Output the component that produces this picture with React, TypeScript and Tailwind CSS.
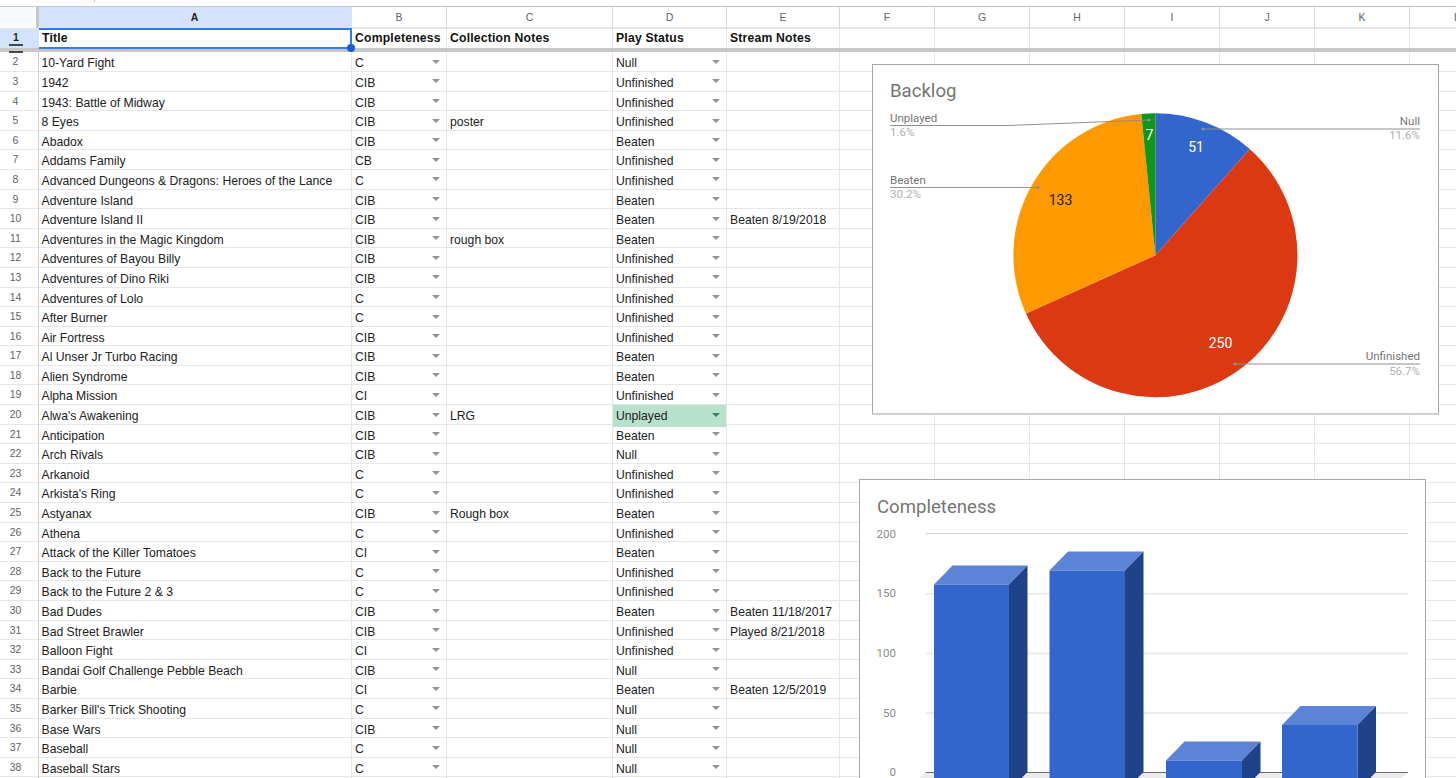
const U = "Unfinished";
const B = "Beaten";

// title, completeness, collection notes, play status, stream notes
const rows: [string, string, string, string, string][] = [
  ["10-Yard Fight", "C", "", "Null", ""],
  ["1942", "CIB", "", U, ""],
  ["1943: Battle of Midway", "CIB", "", U, ""],
  ["8 Eyes", "CIB", "poster", U, ""],
  ["Abadox", "CIB", "", B, ""],
  ["Addams Family", "CB", "", U, ""],
  ["Advanced Dungeons & Dragons: Heroes of the Lance", "C", "", U, ""],
  ["Adventure Island", "CIB", "", B, ""],
  ["Adventure Island II", "CIB", "", B, "Beaten 8/19/2018"],
  ["Adventures in the Magic Kingdom", "CIB", "rough box", B, ""],
  ["Adventures of Bayou Billy", "CIB", "", U, ""],
  ["Adventures of Dino Riki", "CIB", "", U, ""],
  ["Adventures of Lolo", "C", "", U, ""],
  ["After Burner", "C", "", U, ""],
  ["Air Fortress", "CIB", "", U, ""],
  ["Al Unser Jr Turbo Racing", "CIB", "", B, ""],
  ["Alien Syndrome", "CIB", "", B, ""],
  ["Alpha Mission", "CI", "", U, ""],
  ["Alwa's Awakening", "CIB", "LRG", "Unplayed", ""],
  ["Anticipation", "CIB", "", B, ""],
  ["Arch Rivals", "CIB", "", "Null", ""],
  ["Arkanoid", "C", "", U, ""],
  ["Arkista's Ring", "C", "", U, ""],
  ["Astyanax", "CIB", "Rough box", B, ""],
  ["Athena", "C", "", U, ""],
  ["Attack of the Killer Tomatoes", "CI", "", B, ""],
  ["Back to the Future", "C", "", U, ""],
  ["Back to the Future 2 & 3", "C", "", U, ""],
  ["Bad Dudes", "CIB", "", B, "Beaten 11/18/2017"],
  ["Bad Street Brawler", "CIB", "", U, "Played 8/21/2018"],
  ["Balloon Fight", "CI", "", U, ""],
  ["Bandai Golf Challenge Pebble Beach", "CIB", "", "Null", ""],
  ["Barbie", "CI", "", B, "Beaten 12/5/2019"],
  ["Barker Bill's Trick Shooting", "C", "", "Null", ""],
  ["Base Wars", "CIB", "", "Null", ""],
  ["Baseball", "C", "", "Null", ""],
  ["Baseball Stars", "C", "", "Null", ""],
];

const gridCols =
  "grid grid-cols-[39px_313px_95px_166px_114px_113px_95px_95px_95px_95px_95px_95px_95px]";
const letters = ["F", "G", "H", "I", "J", "K", "L"];

function Arrow({ dark }: { dark?: boolean }) {
  return (
    <svg width="8" height="4" viewBox="0 0 8 4" className="absolute right-[6px] top-[7.5px]">
      <path d="M0 0H8L4 4Z" fill={dark ? "#3f7d5e" : "#949494"} />
    </svg>
  );
}

function EmptyCells() {
  return (
    <>
      {letters.map((l) => (
        <div key={l} className="border-r border-[#e6e6e6]" />
      ))}
    </>
  );
}

function Row({ n, data }: { n: number; data: [string, string, string, string, string] }) {
  const [title, comp, notes, status, stream] = data;
  const cell = "border-r border-[#e6e6e6] overflow-visible whitespace-nowrap leading-[22px]";
  return (
    <div className={`${gridCols} h-[19.6px] border-b border-[#e6e6e6]`}>
      <div className="border-r border-[#d0d0d0] pr-[7px] text-center text-[10.5px] leading-[18px] text-[#5f6368]">
        {n}
      </div>
      <div className={`${cell} pl-[2.5px]`}>{title}</div>
      <div className={`${cell} relative pl-[3px]`}>
        {comp}
        <Arrow />
      </div>
      <div className={`${cell} pl-[3px]`}>{notes}</div>
      <div className={`${cell} relative pl-[3px] ${status === "Unplayed" ? "bg-[#b7e1cd]" : ""}`}>
        {status}
        <Arrow dark={status === "Unplayed"} />
      </div>
      <div className={`${cell} pl-[3px]`}>{stream}</div>
      <EmptyCells />
    </div>
  );
}

// slices run clockwise from 12 o'clock
const slices = [
  { value: 51, color: "#3366cc" },
  { value: 250, color: "#dc3912" },
  { value: 133, color: "#ff9900" },
  { value: 7, color: "#109618" },
];

function slicePaths() {
  const total = 441;
  let acc = 0;
  return slices.map((s) => {
    const a0 = (acc / total) * 2 * Math.PI;
    acc += s.value;
    const a1 = (acc / total) * 2 * Math.PI;
    const large = a1 - a0 > Math.PI ? 1 : 0;
    const x0 = 1155.4 + 142 * Math.sin(a0);
    const y0 = 255.2 - 142 * Math.cos(a0);
    const x1 = 1155.4 + 142 * Math.sin(a1);
    const y1 = 255.2 - 142 * Math.cos(a1);
    return {
      color: s.color,
      d: `M1155.4 255.2L${x0} ${y0}A142 142 0 ${large} 1 ${x1} ${y1}Z`,
    };
  });
}

function BacklogChart() {
  const roboto = { fontFamily: "Roboto, sans-serif" };
  return (
    <div className="absolute left-[872px] top-[64px] h-[351px] w-[567px] border border-[#a6a6a6] border-b-2 border-b-[#d0d0d0] bg-white">
      <svg viewBox="873 65 565 348" className="block h-full w-full" style={roboto}>
        <text x="890" y="97" fontSize="18.6" fill="#757575">Backlog</text>
        {slicePaths().map((p) => (
          <path key={p.color} d={p.d} fill={p.color} />
        ))}

        <g stroke="#8f8f8f" fill="none">
          <path d="M890 125.5H1008L1149 120" />
          <path d="M1203 129H1420" />
          <path d="M890 187.5H1038" />
          <path d="M1235 364H1420" />
        </g>
        <g fill="#8f8f8f">
          <circle cx="1149" cy="120" r="1.6" />
          <circle cx="1203" cy="129" r="1.6" />
          <circle cx="1038" cy="187.5" r="1.6" />
          <circle cx="1235" cy="364" r="1.6" />
        </g>

        <g fontSize="11.5" fill="#757575">
          <text x="890" y="122">Unplayed</text>
          <text x="890" y="184">Beaten</text>
          <text x="1420" y="125" textAnchor="end">Null</text>
          <text x="1420" y="360" textAnchor="end">Unfinished</text>
        </g>
        <g fontSize="11.5" fill="#b0b0b0">
          <text x="890" y="136">1.6%</text>
          <text x="890" y="198">30.2%</text>
          <text x="1420" y="139" textAnchor="end">11.6%</text>
          <text x="1420" y="375" textAnchor="end">56.7%</text>
        </g>

        <g fontSize="14" textAnchor="middle" fill="#ffffff">
          <text x="1149.5" y="140">7</text>
          <text x="1196" y="152">51</text>
          <text x="1220.5" y="348">250</text>
          <text x="1060.5" y="205" fill="#222222">133</text>
        </g>
      </svg>
    </div>
  );
}

const bars = [
  { x0: 934, x1: 1009, top: 584.5 },
  { x0: 1049.5, x1: 1125, top: 570.5 },
  { x0: 1166, x1: 1242, top: 760.5 },
  { x0: 1282, x1: 1357.5, top: 725 },
];

function CompletenessChart() {
  return (
    <div className="absolute left-[859px] top-[479px] h-[330px] w-[567px] border border-[#a6a6a6] bg-white">
      <svg
        viewBox="860 480 565 328"
        className="block h-full w-full"
        style={{ fontFamily: "Roboto, sans-serif" }}
      >
        <text x="877" y="513" fontSize="18.6" fill="#757575">Completeness</text>

        <g fontSize="11.5" fill="#8a8a8a" textAnchor="end">
          <text x="896" y="538">200</text>
          <text x="896" y="597">150</text>
          <text x="896" y="657">100</text>
          <text x="896" y="717">50</text>
          <text x="896" y="776">0</text>
        </g>

        <path d="M925.5 533.5H1408" stroke="#d4d4d4" />
        <g stroke="#ebebeb" strokeWidth="2">
          <path d="M925.5 593.8H1408" />
          <path d="M925.5 653.4H1408" />
          <path d="M925.5 713H1408" />
        </g>
        <path d="M925.5 772H1408L1389 791H906.5Z" fill="#ebebeb" />
        <path d="M925.5 772.5H1408" stroke="#6e6e6e" />

        {bars.map((b) => (
          <g key={b.x0}>
            <path
              d={`M${b.x0} ${b.top}L${b.x0 + 18.5} ${b.top - 19}H${b.x1 + 18.5}L${b.x1} ${b.top}Z`}
              fill="#5b83d6"
            />
            <path
              d={`M${b.x1} ${b.top}L${b.x1 + 18.5} ${b.top - 19}V772L${b.x1} 791Z`}
              fill="#204288"
            />
            <rect x={b.x0} y={b.top} width={b.x1 - b.x0} height={791 - b.top} fill="#3366cc" />
          </g>
        ))}
      </svg>
    </div>
  );
}

export default function App() {
  return (
    <div className="relative h-[778px] w-[1456px] overflow-hidden bg-white pt-[6px] font-['Liberation_Sans',Arial,sans-serif] text-[12.2px] text-[#222222]">
      {/* stray tick at the top edge of the crop */}
      <div className="absolute left-[94px] top-0 h-[2px] w-px bg-[#c4c4c4]" />

      {/* column letters */}
      <div
        className={`${gridCols} h-[23px] border-t border-b-2 border-[#c7c7c7] border-b-[#e6e6e6] text-[10.5px] leading-[21px] text-[#5f6368]`}
      >
        <div className="border-r-[3px] border-[#c7c7c7] bg-[#f8f9fa]" />
        <div className="bg-[#d3e3fd] pr-[2px] text-center font-bold text-[#1f1f1f]">A</div>
        {["B", "C", "D", "E", ...letters].map((l) => (
          <div key={l} className="border-r border-[#d6d6d6] text-center">
            {l}
          </div>
        ))}
      </div>

      {/* frozen header row */}
      <div className={`${gridCols} h-[19px] font-bold tracking-[0.2px] text-[#111111]`}>
        <div className="bg-[#d3e3fd] pr-[7px] text-center text-[10.5px] leading-[16px] text-[#1f1f1f]">
          1
        </div>
        <div className="-mb-px -mt-px border-y-2 border-r-2 border-[#2b7de9] bg-white pl-[3px] leading-[17px]">
          Title
        </div>
        <div className="border-r border-[#e6e6e6] pl-[3px] leading-[19px]">Completeness</div>
        <div className="border-r border-[#e6e6e6] pl-[3px] leading-[19px]">Collection Notes</div>
        <div className="border-r border-[#e6e6e6] pl-[3px] leading-[19px]">Play Status</div>
        <div className="border-r border-[#e6e6e6] pl-[3px] leading-[19px]">Stream Notes</div>
        <EmptyCells />
      </div>
      <div className="h-[4.4px] bg-[#c7c7c7]" />

      {rows.map((r, i) => (
        <Row key={r[0]} n={i + 2} data={r} />
      ))}

      {/* freeze handle and selection dot */}
      <div className="absolute left-[9px] top-[44px] h-[2px] w-[14px] bg-[#444746]" />
      <div className="absolute left-[9px] top-[51px] h-[2px] w-[14px] bg-[#444746]" />
      <div className="absolute left-[347px] top-[44px] h-[8px] w-[8px] rounded-full bg-[#1a5fd0]" />

      <BacklogChart />
      <CompletenessChart />
    </div>
  );
}
